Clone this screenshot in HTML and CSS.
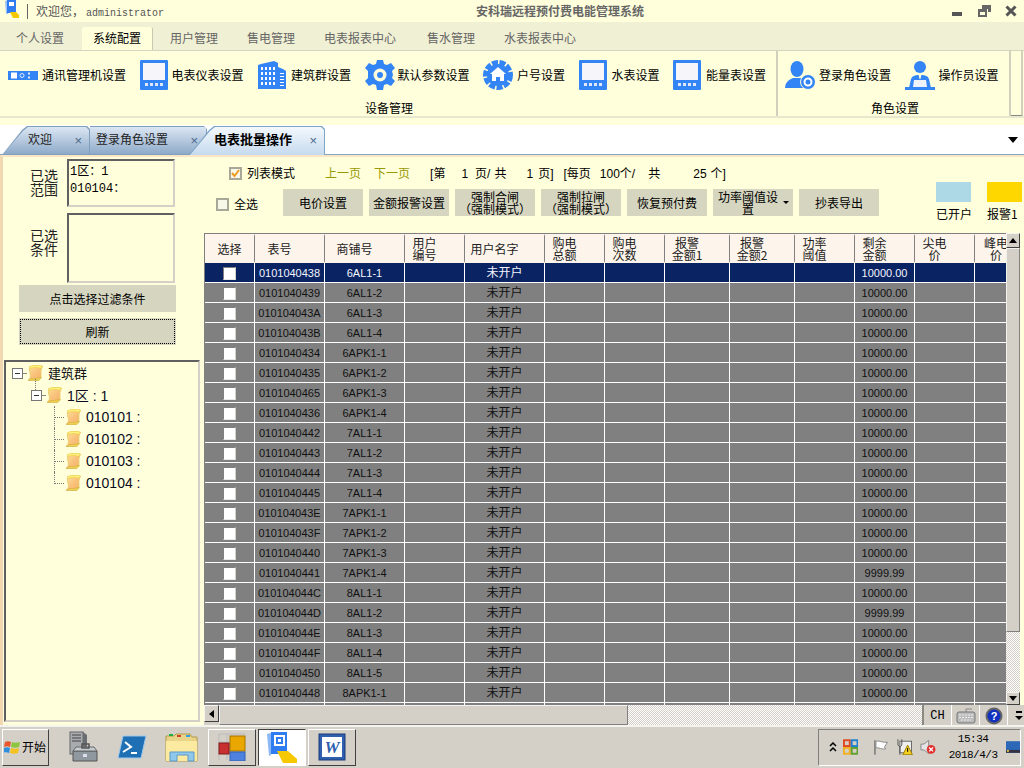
FILE: index.html
```html
<!DOCTYPE html>
<html lang="zh-CN">
<head>
<meta charset="utf-8">
<title>安科瑞远程预付费电能管理系统</title>
<link rel="stylesheet" href="styles.css">
</head>
<body>
<svg class="defs" width="0" height="0" aria-hidden="true">
  <defs>
    <linearGradient id="scrollG" x1="0" y1="0" x2="1" y2="1"><stop offset="0" stop-color="#fde49a"/><stop offset=".5" stop-color="#f9c27c"/><stop offset="1" stop-color="#f4b068"/></linearGradient>
    <symbol id="i-meter" viewBox="0 0 28 30"><rect width="28" height="30" rx="1" fill="#3385f5"/><rect x="3" y="3" width="22" height="17" fill="#f5f5fa"/><g fill="#dfe9fb"><rect x="5" y="23" width="3" height="3"/><rect x="10" y="23" width="3" height="3"/><rect x="15" y="23" width="3" height="3"/><rect x="20" y="23" width="3" height="3"/></g></symbol>
    <symbol id="i-scroll" viewBox="0 0 16 16"><path d="M3 2C6 .5 12 .5 15.500 1.500 13.500 4 14 7 14 10c0 2-1 4-2.500 5H1.500C3.500 13 4 11 3 8 2.300 6 2 4 3 2z" fill="url(#scrollG)" stroke="#e8c860" stroke-width=".8"/><path d="M2.500 1.500C6 0 12 0 15.500 1c-.8 1-1 1.500-1.200 2.500C10 2 6 2.500 3 3.500z" fill="#fff27a" stroke="#e0c040" stroke-width=".5"/><path d="M1 15.500h10.500c1.500-.8 2.500-2 3-3.500-3 1.500-7 1.500-10.500 1.500-.5 1-1.500 1.500-2.500 2z" fill="#f0d050" stroke="#c8a838" stroke-width=".5"/></symbol>
  </defs>
</svg>

<header class="titlebar">
  <svg class="app-logo" width="16" height="18" viewBox="0 0 16 18"><path d="M1 1l3-1v14H2z" fill="#9cc0f5"/><rect x="3" y="0" width="9" height="13" fill="#2f7df0"/><rect x="5" y="2" width="5" height="4" fill="#fff"/><path d="M6 12h6l3 3v3H9z" fill="#f5c800"/></svg>
  <span class="title-sep"></span>
  <span class="welcome">欢迎您，<span class="admin">administrator</span></span>
  <strong class="app-title">安科瑞远程预付费电能管理系统</strong>
  <div class="winctl">
    <svg width="12" height="12" viewBox="0 0 12 12"><rect x="1" y="7" width="10" height="4" fill="#555"/></svg>
    <svg width="14" height="12" viewBox="0 0 14 12"><path d="M5 0h9v7h-3V4H5z" fill="#666"/><path d="M1 4h9v8H1z" fill="#666"/><rect x="3" y="7" width="5" height="3" fill="#ffffdc"/></svg>
    <svg width="12" height="12" viewBox="0 0 12 12"><path d="M1.500 1.500l9 9m0-9l-9 9" stroke="#555" stroke-width="3"/></svg>
  </div>
</header>

<nav class="menu">
  <span class="menu-item">个人设置</span>
  <span class="menu-item active">系统配置</span>
  <span class="menu-item">用户管理</span>
  <span class="menu-item">售电管理</span>
  <span class="menu-item long">电表报表中心</span>
  <span class="menu-item">售水管理</span>
  <span class="menu-item">水表报表中心</span>
</nav>

<section class="ribbon">
  <div class="rgroup rg-device">
    <div class="ritems">
      <div class="ritem"><svg class="ic30" viewBox="0 0 30 30"><rect y="11" width="30" height="9" fill="#3385f5"/><rect x="3" y="12.500" width="6" height="6" fill="#fff"/><circle cx="14" cy="15.500" r="2" fill="none" stroke="#dfe9fb"/><rect x="20" y="12.500" width="2" height="2" fill="#dfe9fb"/><rect x="20" y="16.500" width="2" height="2" fill="#dfe9fb"/></svg><span>通讯管理机设置</span></div>
      <div class="ritem"><svg class="ic28"><use href="#i-meter"/></svg><span>电表仪表设置</span></div>
      <div class="ritem"><svg class="ic30" viewBox="0 0 30 30"><path d="M1 5l3-1 13-3 4 2v26H1z" fill="#3385f5"/><path d="M21 7l5 2 3 2v18h-8z" fill="#3385f5"/><g fill="#fff"><path d="M4 7h2v3H4zM8 7h2v3H8zM12 7h2v3h-2zM16 7h2v3h-2zM4 12h2v3H4zM8 12h2v3H8zM12 12h2v3h-2zM16 12h2v3h-2zM4 17h2v3H4zM8 17h2v3H8zM12 17h2v3h-2zM16 17h2v3h-2zM4 22h2v3H4zM8 22h2v3H8zM12 22h2v3h-2zM16 22h2v3h-2zM23 13h4v1h-4zM23 16h4v1h-4zM23 19h4v1h-4zM23 22h4v1h-4zM23 25h4v1h-4z"/></g></svg><span>建筑群设置</span></div>
      <div class="ritem tight"><svg class="ic30" viewBox="0 0 30 30"><path d="M12 0h6l1 4 3 1 4-2 4 5-3 3 1 4-1 3 3 3-4 5-4-2-3 1-1 5h-6l-1-5-3-1-4 2-4-5 3-3V11L0 8l4-5 4 2 3-1z" fill="#3385f5"/><circle cx="15" cy="15" r="6.500" fill="#fffedc"/><circle cx="15" cy="15" r="3" fill="#3385f5"/></svg><span>默认参数设置</span></div>
      <div class="ritem"><svg class="ic30" viewBox="0 0 30 30"><circle cx="15" cy="15" r="12.500" fill="none" stroke="#3385f5" stroke-width="5" stroke-dasharray="6 1.500"/><circle cx="15" cy="15" r="11" fill="#3385f5"/><path d="M15 7l8 7h-2v7h-4v-4h-4v4H9v-7H7z" fill="#fff"/></svg><span>户号设置</span></div>
      <div class="ritem wide"><svg class="ic28"><use href="#i-meter"/></svg><span>水表设置</span></div>
      <div class="ritem wide"><svg class="ic28"><use href="#i-meter"/></svg><span>能量表设置</span></div>
    </div>
    <div class="rlabel">设备管理</div>
  </div>
  <div class="rgroup rg-role">
    <div class="ritems">
      <div class="ritem"><svg class="ic30" viewBox="0 0 30 30"><ellipse cx="12" cy="9" rx="6.500" ry="8" fill="#3385f5"/><path d="M0 28c0-6 5-9 8-10h8c3 1 6 3 6 5l-4 5z" fill="#3385f5"/><circle cx="23" cy="22" r="7.500" fill="#3385f5" stroke="#fffedc"/><circle cx="23" cy="22" r="3.500" fill="none" stroke="#fff" stroke-width="2"/></svg><span>登录角色设置</span></div>
      <div class="ritem"><svg class="ic30" viewBox="0 0 30 30"><circle cx="15" cy="7" r="6" fill="#3385f5"/><path d="M4 28l2-9c1-3 4-4 7-4h4c3 0 6 1 7 4l2 9z" fill="#3385f5"/><path d="M9 20h12l1 7H8z" fill="#eef2fb"/><rect y="27" width="30" height="3" fill="#3385f5"/><path d="M13.500 14h3l-1 5h-1z" fill="#fffedc"/></svg><span>操作员设置</span></div>
    </div>
    <div class="rlabel">角色设置</div>
  </div>
  <div class="rgroup rg-end"></div>
</section>

<div class="doc-tabs">
  <div class="doc-tab t1"><span class="dt-text">欢迎</span><span class="dt-x">×</span></div>
  <div class="doc-tab t2"><span class="dt-text">登录角色设置</span><span class="dt-x">×</span></div>
  <div class="doc-tab t3 on"><span class="dt-text">电表批量操作</span><span class="dt-x">×</span></div>
  <span class="tab-menu"></span>
</div>

<main class="content">
  <aside class="left">
    <div class="sel-row sr1">
      <div class="sel-label">已选<br>范围</div>
      <div class="inset box1"><span class="scope-line">1区：1</span><br><span class="scope-line">010104：</span></div>
    </div>
    <div class="sel-row sr2">
      <div class="sel-label">已选<br>条件</div>
      <div class="inset box2"></div>
    </div>
    <button class="btn wide-btn filter">点击选择过滤条件</button>
    <button class="btn wide-btn refresh">刷新</button>
    <div class="tree inset">
      <div class="t-row r0"><span class="toggle"></span><span class="dash"></span><svg class="scr"><use href="#i-scroll"/></svg><span class="t-cjk">建筑群</span></div>
      <div class="t-row r1"><span class="toggle stem"></span><span class="dash"></span><svg class="scr"><use href="#i-scroll"/></svg><span class="t-num">1区 : 1</span></div>
      <div class="t-row r2"><span class="conn"></span><svg class="scr"><use href="#i-scroll"/></svg><span class="t-num">010101 :</span></div>
      <div class="t-row r2"><span class="conn"></span><svg class="scr"><use href="#i-scroll"/></svg><span class="t-num">010102 :</span></div>
      <div class="t-row r2"><span class="conn"></span><svg class="scr"><use href="#i-scroll"/></svg><span class="t-num">010103 :</span></div>
      <div class="t-row r2"><span class="conn last"></span><svg class="scr"><use href="#i-scroll"/></svg><span class="t-num">010104 :</span></div>
    </div>
  </aside>

  <section class="right">
    <div class="toolbar">
      <div class="tool-main">
        <div class="pager">
          <span class="check checked"><svg width="9" height="9" viewBox="0 0 9 9"><path d="M1 4l2.500 3L8 1" fill="none" stroke="#f09a20" stroke-width="2"/></svg></span>
          <span class="g5">列表模式</span>
          <span class="link g30">上一页</span>
          <span class="link g13">下一页</span>
          <span class="g20">[第</span><span class="g16">1</span><span class="g7">页/</span><span class="g4">共</span><span class="g20">1</span><span class="g5">页]</span>
          <span class="g10">[每页</span><span class="g9">100</span><span class="g0">个/</span><span class="g13">共</span><span class="g33">25</span><span class="g4">个]</span>
        </div>
        <div class="actions">
          <span class="check all"></span>
          <span class="g5 all-label">全选</span>
          <button class="btn act first">电价设置</button>
          <button class="btn act">金额报警设置</button>
          <button class="btn act two">强制合闸<br>（强制模式）</button>
          <button class="btn act two">强制拉闸<br>（强制模式）</button>
          <button class="btn act">恢复预付费</button>
          <button class="btn act two drop"><span>功率阈值设<br>置</span><i class="caret"></i></button>
          <button class="btn act">抄表导出</button>
        </div>
      </div>
      <div class="legend">
        <div class="leg"><span class="swatch s-open"></span><span>已开户</span></div>
        <div class="leg"><span class="swatch s-alarm"></span><span>报警1</span></div>
      </div>
    </div>

    <div class="grid-wrap">
      <div class="grid-clip">
        <table class="grid">
          <colgroup><col class="w50"><col class="w70"><col class="w80"><col class="w60"><col class="w80"><col class="w60"><col class="w60"><col class="w65"><col class="w65"><col class="w60"><col class="w60"><col class="w60"><col class="w52"></colgroup>
          <thead><tr><th class="nop">选择</th><th>表号</th><th>商铺号</th><th>用户<br>编号</th><th>用户名字</th><th>购电<br>总额</th><th>购电<br>次数</th><th>报警<br>金额1</th><th>报警<br>金额2</th><th>功率<br>阈值</th><th>剩余<br>金额</th><th>尖电<br>价</th><th class="last-th">峰电<br>价</th></tr></thead>
          <tbody>
            <tr class="sel"><td><i class="cb"></i></td><td>0101040438</td><td>6AL1-1</td><td></td><td>未开户</td><td></td><td></td><td></td><td></td><td></td><td>10000.00</td><td></td><td></td></tr>
            <tr><td><i class="cb"></i></td><td>0101040439</td><td>6AL1-2</td><td></td><td>未开户</td><td></td><td></td><td></td><td></td><td></td><td>10000.00</td><td></td><td></td></tr>
            <tr><td><i class="cb"></i></td><td>010104043A</td><td>6AL1-3</td><td></td><td>未开户</td><td></td><td></td><td></td><td></td><td></td><td>10000.00</td><td></td><td></td></tr>
            <tr><td><i class="cb"></i></td><td>010104043B</td><td>6AL1-4</td><td></td><td>未开户</td><td></td><td></td><td></td><td></td><td></td><td>10000.00</td><td></td><td></td></tr>
            <tr><td><i class="cb"></i></td><td>0101040434</td><td>6APK1-1</td><td></td><td>未开户</td><td></td><td></td><td></td><td></td><td></td><td>10000.00</td><td></td><td></td></tr>
            <tr><td><i class="cb"></i></td><td>0101040435</td><td>6APK1-2</td><td></td><td>未开户</td><td></td><td></td><td></td><td></td><td></td><td>10000.00</td><td></td><td></td></tr>
            <tr><td><i class="cb"></i></td><td>0101040465</td><td>6APK1-3</td><td></td><td>未开户</td><td></td><td></td><td></td><td></td><td></td><td>10000.00</td><td></td><td></td></tr>
            <tr><td><i class="cb"></i></td><td>0101040436</td><td>6APK1-4</td><td></td><td>未开户</td><td></td><td></td><td></td><td></td><td></td><td>10000.00</td><td></td><td></td></tr>
            <tr><td><i class="cb"></i></td><td>0101040442</td><td>7AL1-1</td><td></td><td>未开户</td><td></td><td></td><td></td><td></td><td></td><td>10000.00</td><td></td><td></td></tr>
            <tr><td><i class="cb"></i></td><td>0101040443</td><td>7AL1-2</td><td></td><td>未开户</td><td></td><td></td><td></td><td></td><td></td><td>10000.00</td><td></td><td></td></tr>
            <tr><td><i class="cb"></i></td><td>0101040444</td><td>7AL1-3</td><td></td><td>未开户</td><td></td><td></td><td></td><td></td><td></td><td>10000.00</td><td></td><td></td></tr>
            <tr><td><i class="cb"></i></td><td>0101040445</td><td>7AL1-4</td><td></td><td>未开户</td><td></td><td></td><td></td><td></td><td></td><td>10000.00</td><td></td><td></td></tr>
            <tr><td><i class="cb"></i></td><td>010104043E</td><td>7APK1-1</td><td></td><td>未开户</td><td></td><td></td><td></td><td></td><td></td><td>10000.00</td><td></td><td></td></tr>
            <tr><td><i class="cb"></i></td><td>010104043F</td><td>7APK1-2</td><td></td><td>未开户</td><td></td><td></td><td></td><td></td><td></td><td>10000.00</td><td></td><td></td></tr>
            <tr><td><i class="cb"></i></td><td>0101040440</td><td>7APK1-3</td><td></td><td>未开户</td><td></td><td></td><td></td><td></td><td></td><td>10000.00</td><td></td><td></td></tr>
            <tr><td><i class="cb"></i></td><td>0101040441</td><td>7APK1-4</td><td></td><td>未开户</td><td></td><td></td><td></td><td></td><td></td><td>9999.99</td><td></td><td></td></tr>
            <tr><td><i class="cb"></i></td><td>010104044C</td><td>8AL1-1</td><td></td><td>未开户</td><td></td><td></td><td></td><td></td><td></td><td>10000.00</td><td></td><td></td></tr>
            <tr><td><i class="cb"></i></td><td>010104044D</td><td>8AL1-2</td><td></td><td>未开户</td><td></td><td></td><td></td><td></td><td></td><td>9999.99</td><td></td><td></td></tr>
            <tr><td><i class="cb"></i></td><td>010104044E</td><td>8AL1-3</td><td></td><td>未开户</td><td></td><td></td><td></td><td></td><td></td><td>10000.00</td><td></td><td></td></tr>
            <tr><td><i class="cb"></i></td><td>010104044F</td><td>8AL1-4</td><td></td><td>未开户</td><td></td><td></td><td></td><td></td><td></td><td>10000.00</td><td></td><td></td></tr>
            <tr><td><i class="cb"></i></td><td>0101040450</td><td>8AL1-5</td><td></td><td>未开户</td><td></td><td></td><td></td><td></td><td></td><td>10000.00</td><td></td><td></td></tr>
            <tr><td><i class="cb"></i></td><td>0101040448</td><td>8APK1-1</td><td></td><td>未开户</td><td></td><td></td><td></td><td></td><td></td><td>10000.00</td><td></td><td></td></tr>
            <tr><td></td><td></td><td></td><td></td><td></td><td></td><td></td><td></td><td></td><td></td><td></td><td></td><td></td></tr>
          </tbody>
        </table>
      </div>
      <div class="vscroll">
        <span class="sb-btn"><i class="tri up"></i></span>
        <span class="v-thumb"></span>
        <span class="checker v-track"></span>
        <span class="sb-btn"><i class="tri down"></i></span>
      </div>
    </div>

    <div class="bottom-row">
      <div class="hscroll">
        <span class="sb-btn h"><i class="tri left-t"></i></span>
        <span class="h-thumb"></span>
        <span class="checker h-track"></span>
      </div>
      <div class="ime">
        <span class="ime-cell ch">CH</span>
        <span class="ime-cell"><svg width="20" height="16" viewBox="0 0 20 16"><path d="M10 4V1h6" fill="none" stroke="#888"/><rect x="1" y="4" width="18" height="11" rx="2" fill="#bbb" stroke="#777"/><path d="M3 7h14M3 9.500h14M5 12h10" stroke="#eee" stroke-dasharray="2 1"/></svg></span>
        <span class="ime-cell"><svg width="18" height="18" viewBox="0 0 18 18"><circle cx="9" cy="9" r="8.500" fill="#666"/><circle cx="9" cy="9" r="6.500" fill="#1030c0"/><text x="9" y="13" class="help-q" text-anchor="middle">?</text></svg></span>
        <span class="ime-cell ime-last"><i class="ime-dash"></i><i class="tri down small"></i></span>
      </div>
    </div>
  </section>
</main>

<footer class="taskbar">
  <button class="tb-btn start"><svg width="17" height="17" viewBox="0 0 17 17"><path d="M1 3c2-1 4-1 6 0l-1 5c-2-1-4-1-6 0z" fill="#e8552a"/><path d="M8 3c2 1 5 1 8 0l-1 5c-3 1-5 1-8 0z" fill="#8cc63f"/><path d="M0 9c2-1 4-1 6 0l-1 5c-2-1-4-1-6 0z" fill="#2f8fdc"/><path d="M7 9c2 1 5 1 8 0l-1 5c-3 1-5 1-8 0z" fill="#f5c320"/></svg><span>开始</span></button>
  <div class="quick">
    <svg width="30" height="32" viewBox="0 0 30 32"><rect x="1" y="1" width="13" height="22" fill="#a8acb0" stroke="#666"/><path d="M14 1l4 3v16l-4 3z" fill="#6a6e72"/><path d="M3 4h9M3 7h9M3 10h9" stroke="#444"/><path d="M4 20h24v10H4z" fill="#8f989f" stroke="#555"/><path d="M4 20l3-4h18l3 4z" fill="#c5ccd2" stroke="#666"/><rect x="13" y="13" width="7" height="4" fill="none" stroke="#555" stroke-width="1.500"/><rect x="14" y="23" width="4" height="3" fill="#dde"/></svg>
    <svg width="30" height="24" viewBox="0 0 30 24"><path d="M6 1h23l-5 22H1z" fill="#1f6fb5" stroke="#9cc8ea"/><path d="M8 7l6 5-8 5" fill="none" stroke="#fff" stroke-width="2"/><path d="M14 18h6" stroke="#fff" stroke-width="2"/></svg>
    <svg width="33" height="30" viewBox="0 0 33 30"><path d="M1 4h8l2-2h14l2 3h5v24H1z" fill="#e8d488" stroke="#b49a4a"/><rect x="4" y="2" width="4" height="2" fill="#20b040"/><rect x="12" y="3" width="4" height="2" fill="#d04030"/><rect x="21" y="3" width="4" height="2" fill="#30a0e0"/><path d="M1 9h31v20H1z" fill="#fbeaa0"/><path d="M5 29V20h24v9h-6v-6H12v6z" fill="#90c8ec" stroke="#5a98c8"/></svg>
  </div>
  <button class="tb-btn app"><svg width="28" height="28" viewBox="0 0 28 28"><path d="M1 1h26M1 9h26M1 18h26M9 1v26M1 1v26" stroke="#bbb" fill="none"/><rect x="12" y="3" width="15" height="15" fill="#eaa700" stroke="#a87400"/><rect x="12" y="19" width="15" height="9" fill="#4f82e0" stroke="#3060b0"/><rect x="1" y="10" width="10" height="11" fill="#c83030" stroke="#801818"/></svg></button>
  <button class="tb-btn app pressed"><svg width="32" height="32" viewBox="0 0 32 32"><path d="M1 3l4-1v22l-2 1z" fill="#8cb8f5"/><rect x="5" y="1" width="16" height="22" fill="#2f7df0"/><rect x="9" y="5" width="9" height="9" fill="none" stroke="#fff" stroke-width="2"/><rect x="12" y="8" width="3" height="3" fill="#fff"/><path d="M11 20h11l9 8v4H17z" fill="#f5c800"/></svg></button>
  <button class="tb-btn app"><svg width="28" height="28" viewBox="0 0 28 28"><rect x="1" y="1" width="26" height="26" fill="#2f5fae" stroke="#1a3a78"/><rect x="4" y="4" width="20" height="20" fill="#fff"/><text x="14" y="20" class="word-w" text-anchor="middle">W</text></svg></button>
  <div class="tray">
    <svg class="tray-up" width="8" height="10" viewBox="0 0 8 10"><path d="M1 4l3-3 3 3M1 9l3-3 3 3" fill="none" stroke="#000" stroke-width="1.500"/></svg>
    <svg class="tray-office" width="16" height="16" viewBox="0 0 16 16"><rect x="1" y="1" width="6" height="6" fill="none" stroke="#e04a20" stroke-width="2"/><rect x="9" y="1" width="6" height="6" fill="none" stroke="#2080d0" stroke-width="2"/><rect x="1" y="9" width="6" height="6" fill="none" stroke="#f0b020" stroke-width="2"/><rect x="9" y="9" width="6" height="6" fill="none" stroke="#60a030" stroke-width="2"/></svg>
    <svg class="tray-flag" width="16" height="16" viewBox="0 0 16 16"><path d="M2 1v15" stroke="#777" stroke-width="1.500"/><path d="M3 2c4-1 8 2 12 1l-3 5 1 2c-4 1-7-2-10-1z" fill="#fff" stroke="#888"/></svg>
    <svg class="tray-power" width="17" height="16" viewBox="0 0 17 16"><rect x="3" y="2" width="12" height="12" fill="#eee" stroke="#666"/><path d="M1 0v6l2 2v8M3 8l2-2V0" fill="none" stroke="#555"/><path d="M11 6l5 10H6z" fill="#f5d020" stroke="#a08000"/><path d="M11 9v4" stroke="#000"/></svg>
    <svg class="tray-sound" width="17" height="16" viewBox="0 0 17 16"><path d="M1 5h3l5-4v14l-5-4H1z" fill="#e4e4e4" stroke="#888"/><circle cx="11.500" cy="10.500" r="4.500" fill="#e03030"/><path d="M9.500 8.500l4 4m0-4l-4 4" stroke="#fff" stroke-width="1.300"/></svg>
    <div class="clock"><span>15:34</span><span>2018/4/3</span></div>
    <svg class="tray-desk" width="15" height="12" viewBox="0 0 15 12"><rect width="15" height="12" fill="#2d68b8"/><rect y="9" width="15" height="3" fill="#334"/><rect x="1" y="9" width="2" height="2" fill="#e8c040"/></svg>
  </div>
</footer>
</body>
</html>
```

FILE: styles.css
```css
* { box-sizing: border-box; }
html, body { margin: 0; padding: 0; }
body {
  width: 1024px;
  height: 768px;
  overflow: hidden;
  display: flex;
  flex-direction: column;
  background: #ffffdc;
  color: #000;
  font: 12px/14px "Noto Sans CJK SC", "Liberation Sans", sans-serif;
}
.defs { display: block; height: 0; }
button { font: inherit; color: inherit; padding: 0; }

/* title bar */
.titlebar { height: 22px; flex: none; display: flex; align-items: center; background: #ffffdc; padding-left: 4px; position: relative; }
.app-logo { flex: none; margin-top: -5px; }
.title-sep { width: 1px; height: 15px; background: #666; margin: 0 8px 0 7px; }
.welcome { color: #555; width: 440px; white-space: nowrap; }
.admin { font: 10px "Liberation Mono", monospace; letter-spacing: 0; margin-left: 2px; }
.app-title { width: 476px; font-size: 12px; color: #666; font-weight: 700; white-space: nowrap; letter-spacing: 0; }
.winctl { display: flex; align-items: center; gap: 14px; margin-left: -1px; }

/* menu */
.menu { height: 28px; flex: none; display: flex; align-items: flex-end; background: #f0f0d4; padding-left: 1.500px; color: #666; }
.menu-item { padding: 0 14.500px; height: 23px; line-height: 22px; white-space: nowrap; }
.menu-item.long { padding-right: 16.500px; }
.menu-item.active { margin: 0 3px; padding: 0 10.500px 0 11.500px; background: #ffffdc; color: #000; border-right: 1px solid #c8c8b0; border-radius: 2px 2px 0 0; }

/* ribbon */
.ribbon { height: 68px; flex: none; display: flex; background: #ffffdc; border-top: 1px solid #d4d4c0; border-bottom: 2px solid #e8e8cc; }
.rgroup { display: flex; flex-direction: column; border-right: 2px solid #d0d0bc; }
.rg-device { width: 778px; padding-left: 8px; }
.rg-role { width: 233px; padding-left: 7px; }
.rg-end { width: 12px; border-left: 0; border-bottom: 1px solid #888; }
.ritems { display: flex; height: 50px; padding-top: 1px; align-items: center; gap: 13.500px; }
.ritem { display: flex; align-items: center; gap: 4px; white-space: nowrap; }
.ritem.tight { gap: 3px; }
.ritem.wide { gap: 5px; }
.ic30 { width: 30px; height: 30px; flex: none; }
.ic28 { width: 28px; height: 30px; flex: none; }
.rlabel { text-align: center; line-height: 17px; margin-left: -6px; margin-top: 2px; }
.rg-role .rlabel { margin-left: -4px; }

/* doc tabs */
.doc-tabs { height: 30px; flex: none; margin-top: 7px; display: flex; align-items: flex-end; background: #fff; border-bottom: 1px solid #7fa6c6; padding-left: 2px; position: relative; }
.doc-tab {
  position: relative;
  height: 29px;
  display: flex;
  align-items: center;
  padding-bottom: 3px;
  background: #7f9fbe;
  clip-path: polygon(0 100%, 20px 4px, 25px 0, calc(100% - 3px) 0, 100% 3px, 100% 100%);
  margin-bottom: -1px;
}
.doc-tab::before {
  content: "";
  position: absolute;
  inset: 1px 1px 1px 1px;
  background: linear-gradient(#dbe6f3, #8eaac9);
  clip-path: polygon(0 100%, 20px 4px, 25px 0, calc(100% - 3px) 0, 100% 3px, 100% 100%);
}
.doc-tab > * { position: relative; }
.t1 { width: 88px; padding-left: 26px; z-index: 1; }
.t2 { width: 139px; padding-left: 28px; margin-left: -22px; z-index: 2; clip-path: polygon(22px 0, calc(100% - 3px) 0, 100% 3px, 100% 100%, 0 100%, 22px 100%); }
.t2::before { clip-path: none; left: 22px; }
.t3 { width: 136px; padding-left: 25px; margin-left: -18px; z-index: 3; background: #7fa6c6; }
.t3::before { background: linear-gradient(#f3f8fd, #c6daee); bottom: 0; }
.t3 .dt-text { font-weight: 700; font-size: 13px; letter-spacing: 0; }
.dt-text { white-space: nowrap; color: #222; }
.t3 .dt-text { color: #000; }
.dt-x { position: absolute; color: #4a6a8a; font: 13px "Liberation Sans", sans-serif; right: 8px; top: 7px; }
.t2 .dt-x { right: 9px; }
.tab-menu { margin-left: auto; margin-right: 6px; margin-bottom: 11px; width: 0; height: 0; border: 5px solid transparent; border-top: 6px solid #000; border-bottom: 0; }

/* content */
.content { flex: 1; min-height: 0; display: flex; background: #ffffdc; border-top: 2px solid #fae6c4; border-left: 3px solid #f2d8b0; }
.left { width: 201px; flex: none; display: flex; flex-direction: column; padding: 2px 0 3px 1px; }
.sel-row { display: flex; align-items: flex-start; padding-left: 26px; }
.sel-label { width: 37px; font-size: 14px; line-height: 14px; color: #222; }
.sr1 { height: 54px; }
.sr1 .sel-label { padding-top: 9px; }
.sr2 { height: 73px; }
.sr2 .sel-label { padding-top: 15px; }
.inset { border: 2px solid; border-color: #606060 #d4d0c8 #d4d0c8 #606060; background: #ffffdc; }
.box1 { width: 108px; height: 48px; font: 12px/17px "Liberation Mono", "Noto Sans CJK SC", monospace; padding: 3px 1px 0; }
.box2 { width: 108px; height: 70px; }
.btn { background: #d6d6c0; border: 0; display: block; text-align: center; }
.wide-btn { width: 157px; height: 27px; margin-left: 15px; }
.filter { margin-top: -1px; }
.refresh { margin-top: 6px; outline: 1px dotted #000; outline-offset: -2px; }
.tree { margin-top: 15px; flex: 1; width: 196px; padding: 0 0 0 6px; border-right-width: 2px; border-bottom-width: 2px; }
.t-row { display: flex; align-items: center; height: 22px; }
.r1 { padding-left: 19px; }
.r2 { padding-left: 42px; }
.toggle { width: 11px; height: 11px; border: 1px solid #777; background: linear-gradient(#333, #333) center / 5px 1px no-repeat #fff; flex: none; position: relative; }
.toggle.stem::before { content: ""; position: absolute; left: 3px; top: -12px; height: 11px; border-left: 1px dotted #777; }
.dash { width: 4px; height: 1px; flex: none; background: #888; }
.scr { width: 16px; height: 16px; flex: none; }
.conn { width: 11px; height: 22px; flex: none; border-left: 1px dotted #777; background: repeating-linear-gradient(90deg, #777 0 1px, transparent 1px 2px) 0 11px / 100% 1px no-repeat; }
.conn.last { height: 12px; align-self: flex-start; }
.t-cjk { font-size: 13px; margin-left: 5px; color: #111; }
.t-num { font: 14px "Liberation Sans", "Noto Sans CJK SC", sans-serif; margin-left: 5px; color: #0a0a20; white-space: nowrap; }

/* toolbar */
.right { width: 820px; flex: none; display: flex; flex-direction: column; overflow: hidden; }
.toolbar { height: 76px; flex: none; display: flex; }
.tool-main { width: 732px; flex: none; }
.pager { height: 32px; display: flex; align-items: center; padding-left: 25px; padding-top: 1px; white-space: nowrap; font-family: "Liberation Sans", "Noto Sans CJK SC", sans-serif; }
.check { width: 13px; height: 13px; flex: none; border: 2px solid #a8a898; background: #f8f8e8; display: flex; align-items: center; justify-content: center; }
.link { color: #999900; }
.g0 { margin-left: 0; } .g4 { margin-left: 4px; } .g5 { margin-left: 5px; } .g7 { margin-left: 7px; } .g9 { margin-left: 9px; }
.g10 { margin-left: 10px; } .g13 { margin-left: 13px; } .g16 { margin-left: 16px; }
.g20 { margin-left: 20px; } .g30 { margin-left: 30px; } .g33 { margin-left: 33px; }
.actions { display: flex; align-items: center; height: 27px; padding-left: 12px; }
.all { margin-top: 3px; }
.all-label { margin-top: 3px; }
.act { width: 80px; height: 27px; margin-left: 6px; flex: none; white-space: nowrap; }
.act.first { margin-left: 25px; }
.act.two { line-height: 12px; font-size: 12px; }
.drop { display: flex; align-items: center; justify-content: center; padding-left: 1px; }
.caret { width: 0; height: 0; margin-left: 5px; border: 3px solid transparent; border-top: 3px solid #000; border-bottom: 0; }
.legend { display: flex; gap: 16px; padding-top: 25px; }
.leg { display: flex; flex-direction: column; width: 35px; white-space: nowrap; }
.swatch { display: block; height: 20px; margin-bottom: 5px; }
.s-open { background: #add8e6; }
.s-alarm { background: #ffd700; }

/* grid */
.grid-wrap { height: 472px; flex: none; display: flex; }
.grid-clip { width: 802px; height: 472px; overflow: hidden; border-top: 1px solid #808080; border-left: 1px solid #808080; }
.grid { table-layout: fixed; width: 812px; border-collapse: separate; border-spacing: 0; }
.w50 { width: 50px; } .w70 { width: 70px; } .w80 { width: 80px; } .w60 { width: 60px; } .w65 { width: 65px; } .w52 { width: 42px; }
.grid th { height: 29px; background: #fdf5eb; font-weight: 400; line-height: 12px; padding: 0 20px 0 0; border-right: 1px solid #808080; border-top: 2px solid #fdf5eb; border-bottom: 2px solid #fdf5eb; color: #222; text-align: center; }
.grid th.nop { padding: 0; }
.grid th.last-th { padding: 0; border-right: 0; }
.grid td { height: 20px; padding: 1px 0 0; background: #808080; border-bottom: 1px solid #fff; border-right: 1px solid #fff; text-align: center; font: 11px/18px "Liberation Sans", "Noto Sans CJK SC", sans-serif; color: #111; white-space: nowrap; overflow: hidden; }
.grid td:nth-child(5) { font-size: 12px; }
.grid tr.sel td { background: #0a2463; color: #f4f4ff; }
.cb { display: block; width: 13px; height: 13px; margin: 0 auto; background: #fff; border: 1px solid; border-color: #808080 #d4d0c8 #e8e8e8 #808080; }

/* scrollbars */
.vscroll { width: 14px; flex: none; display: flex; flex-direction: column; background: #d4d0c8; }
.sb-btn { display: flex; align-items: center; justify-content: center; background: #d4d0c8; border: 1px solid; border-color: #f4f4f0 #404040 #404040 #f4f4f0; height: 15px; flex: none; }
.sb-btn:last-child { height: 13px; }
.sb-btn.h { width: 15px; height: 17px; }
.v-thumb { height: 384px; flex: none; background: #d4d0c8; border: 1px solid; border-color: #f0f0ec #808080 #808080 #f0f0ec; }
.checker { background: repeating-conic-gradient(#fff 0 25%, #d4d0c8 0 50%) 0 0 / 2px 2px; }
.v-track { flex: 1; }
.tri { display: block; width: 0; height: 0; border: 4px solid transparent; }
.tri.up { border-top: 0; border-bottom: 5px solid #000; }
.tri.down { border-bottom: 0; border-top: 5px solid #000; }
.tri.left-t { border-left: 0; border-right: 5px solid #000; }
.tri.small { border-width: 4px 4px 0; }
.bottom-row { height: 17px; flex: 1; display: flex; }
.hscroll { width: 718px; flex: none; display: flex; background: #d4d0c8; }
.h-thumb { width: 409px; background: #d4d0c8; border: 1px solid; border-color: #f0f0ec #808080 #808080 #f0f0ec; }
.h-track { flex: 1; }
.ime { flex: 1; display: flex; background: #d4d0c8; border-left: 2px solid #8a8a80; margin-bottom: -2px; }
.ime-cell { height: 21px; width: 28px; display: flex; align-items: center; justify-content: center; border-right: 1px solid #fff; flex: none; }
.ch { font: 12px "Liberation Mono", monospace; }
.ime-last { flex-direction: column; gap: 3px; border: 0; width: 22px; }
.ime-dash { display: block; width: 6px; height: 2px; background: #000; }
.help-q { font: 700 11px "Liberation Sans", sans-serif; fill: #fff; }

/* taskbar */
.taskbar { height: 43px; flex: none; display: flex; align-items: center; background: #d4d0c8; border-top: 2px solid #f4f4ee; padding: 0 3px 1px 2px; }
.tb-btn { height: 37px; background: #d4d0c8; border: 1px solid; border-color: #fff #404040 #404040 #fff; display: flex; align-items: center; justify-content: center; flex: none; }
.start { width: 47px; gap: 1px; padding-right: 1px; font-size: 12px; }
.quick { display: flex; align-items: center; gap: 18px; margin-left: 20px; width: 139px; flex: none; }
.app { width: 48px; margin-right: 2px; }
.pressed { background: #fff; border-color: #404040 #fff #fff #404040; }
.word-w { font: italic 700 17px "Liberation Serif", serif; fill: #2f5fae; }
.tray { margin-left: auto; width: 203px; height: 37px; display: flex; align-items: center; border: 1px solid; border-color: #808080 #fff #fff #808080; padding-left: 8px; }
.tray-up { flex: none; margin-right: 6px; margin-left: 2px; }
.tray-flag { margin-left: 15px; }
.tray-power { margin-left: 8px; }
.tray-sound { margin-left: 7px; }
.clock { display: flex; flex-direction: column; align-items: center; font: 11px/16px "Liberation Mono", monospace; margin-left: 12px; width: 50px; letter-spacing: -.5px; }
.tray-desk { margin-left: 8px; }
```
